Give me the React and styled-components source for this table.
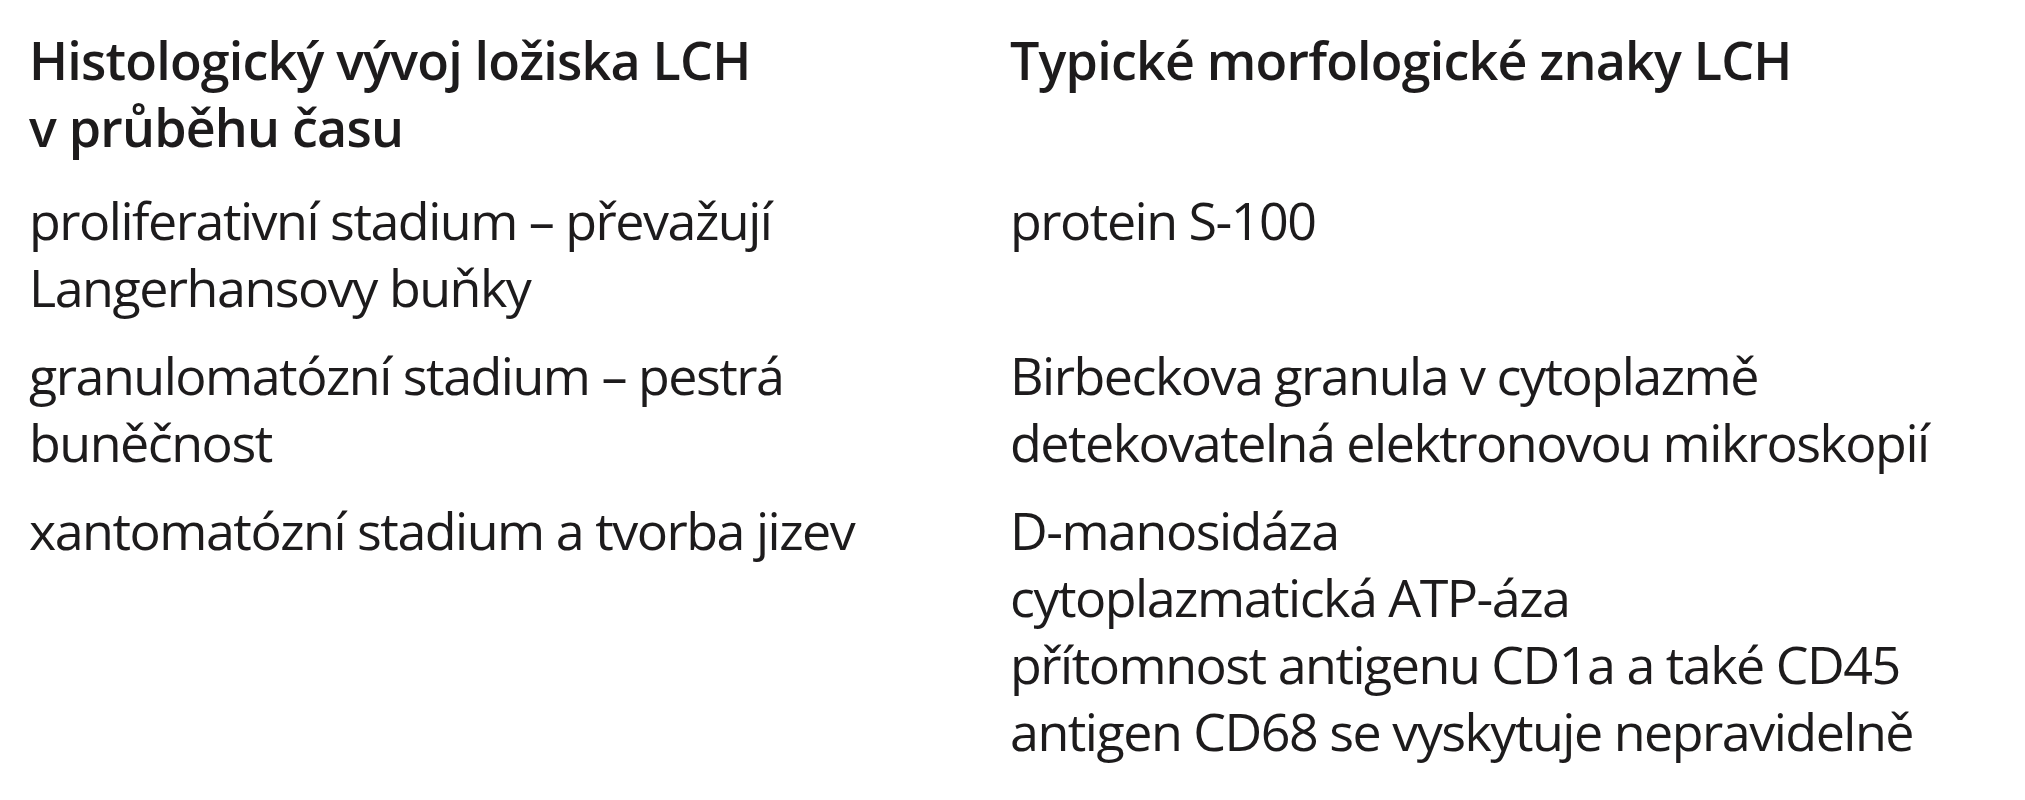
import React from "react";
import styled, { createGlobalStyle } from "styled-components";

const GlobalStyle = createGlobalStyle`
  html, body {
    margin: 0;
    padding: 0;
    background: #ffffff;
  }
`;

const rows = [
  {
    stage: ["proliferativní stadium – převažují", "Langerhansovy buňky"],
    signs: ["protein S-100"]
  },
  {
    stage: ["granulomatózní stadium – pestrá", "buněčnost"],
    signs: ["Birbeckova granula v cytoplazmě", "detekovatelná elektronovou mikroskopií"]
  },
  {
    stage: ["xantomatózní stadium a tvorba jizev"],
    signs: [
      "D-manosidáza",
      "cytoplazmatická ATP-áza",
      "přítomnost antigenu CD1a a také CD45",
      "antigen CD68 se vyskytuje nepravidelně"
    ]
  }
];

function Lines({ lines }) {
  return lines.map((line) => <Line key={line}>{line}</Line>);
}

export default function App() {
  return (
    <>
      <GlobalStyle />
      <StyledTable>
        <HeadCell>
          <Lines lines={["Histologický vývoj ložiska LCH", "v průběhu času"]} />
        </HeadCell>
        <HeadCell>
          <Lines lines={["Typické morfologické znaky LCH"]} />
        </HeadCell>
        {rows.map((row) => (
          <React.Fragment key={row.stage[0]}>
            <BodyCell>
              <Lines lines={row.stage} />
            </BodyCell>
            <BodyCell>
              <Lines lines={row.signs} />
            </BodyCell>
          </React.Fragment>
        ))}
      </StyledTable>
    </>
  );
}

const StyledTable = styled.div`
  display: grid;
  grid-template-columns: 981px 1fr;
  row-gap: 21px;
  padding: 26px 0 0 29px;
  font-family: "Open Sans", "Noto Sans", sans-serif;
  color: #1d1b1c;
  font-size: 52px;
  line-height: 67px;
`;

const HeadCell = styled.div`
  font-weight: 600;
  letter-spacing: -0.8px;
  padding-bottom: 5px;
`;

const BodyCell = styled.div`
  font-weight: 400;
  letter-spacing: -1.5px;
`;

const Line = styled.div`
  white-space: nowrap;
`;
